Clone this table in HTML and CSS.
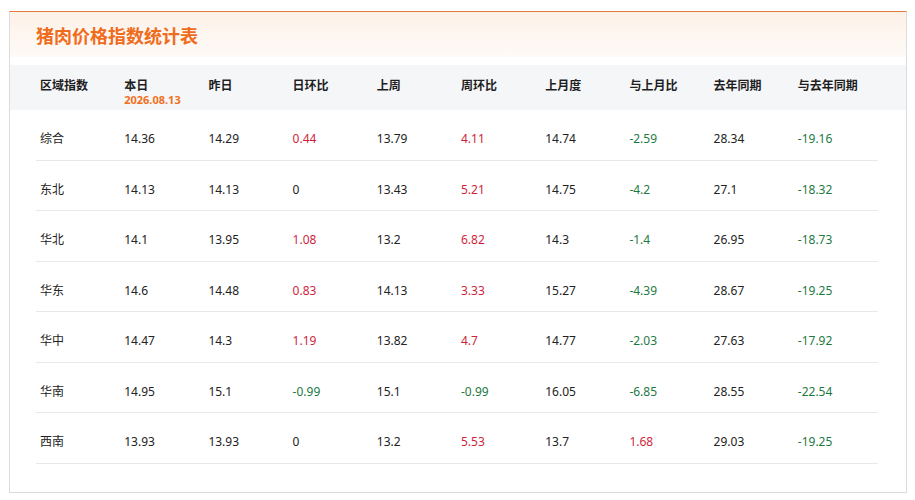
FILE: index.html
```html
<!DOCTYPE html>
<html lang="zh-CN">
<head>
<meta charset="utf-8">
<title>猪肉价格指数统计表</title>
<link rel="stylesheet" href="styles.css">
</head>
<body>
<div class="card">
  <div class="card-head"><h1 class="title">猪肉价格指数统计表</h1></div>
  <div class="thead">
    <div class="grid">
      <div class="th">区域指数</div>
      <div class="th">本日<div class="date">2026.08.13</div></div>
      <div class="th">昨日</div>
      <div class="th">日环比</div>
      <div class="th">上周</div>
      <div class="th">周环比</div>
      <div class="th">上月度</div>
      <div class="th">与上月比</div>
      <div class="th">去年同期</div>
      <div class="th">与去年同期</div>
    </div>
  </div>
  <div class="tbody">
    <div class="grid row">
      <div class="td">综合</div><div class="td">14.36</div><div class="td">14.29</div><div class="td up">0.44</div><div class="td">13.79</div><div class="td up">4.11</div><div class="td">14.74</div><div class="td down">-2.59</div><div class="td">28.34</div><div class="td down">-19.16</div>
    </div>
    <div class="grid row">
      <div class="td">东北</div><div class="td">14.13</div><div class="td">14.13</div><div class="td">0</div><div class="td">13.43</div><div class="td up">5.21</div><div class="td">14.75</div><div class="td down">-4.2</div><div class="td">27.1</div><div class="td down">-18.32</div>
    </div>
    <div class="grid row">
      <div class="td">华北</div><div class="td">14.1</div><div class="td">13.95</div><div class="td up">1.08</div><div class="td">13.2</div><div class="td up">6.82</div><div class="td">14.3</div><div class="td down">-1.4</div><div class="td">26.95</div><div class="td down">-18.73</div>
    </div>
    <div class="grid row">
      <div class="td">华东</div><div class="td">14.6</div><div class="td">14.48</div><div class="td up">0.83</div><div class="td">14.13</div><div class="td up">3.33</div><div class="td">15.27</div><div class="td down">-4.39</div><div class="td">28.67</div><div class="td down">-19.25</div>
    </div>
    <div class="grid row">
      <div class="td">华中</div><div class="td">14.47</div><div class="td">14.3</div><div class="td up">1.19</div><div class="td">13.82</div><div class="td up">4.7</div><div class="td">14.77</div><div class="td down">-2.03</div><div class="td">27.63</div><div class="td down">-17.92</div>
    </div>
    <div class="grid row">
      <div class="td">华南</div><div class="td">14.95</div><div class="td">15.1</div><div class="td down">-0.99</div><div class="td">15.1</div><div class="td down">-0.99</div><div class="td">16.05</div><div class="td down">-6.85</div><div class="td">28.55</div><div class="td down">-22.54</div>
    </div>
    <div class="grid row">
      <div class="td">西南</div><div class="td">13.93</div><div class="td">13.93</div><div class="td">0</div><div class="td">13.2</div><div class="td up">5.53</div><div class="td">13.7</div><div class="td up">1.68</div><div class="td">29.03</div><div class="td down">-19.25</div>
    </div>
  </div>
</div>
</body>
</html>
```

FILE: styles.css
```css
* { box-sizing: border-box; }
html, body { margin: 0; padding: 0; background: #ffffff; }
body {
  font-family: "Noto Sans", "Noto Sans CJK SC", sans-serif;
  font-size: 12px;
  color: #222222;
  padding: 11px 8px 0 9px;
}
.card {
  border: 1px solid #dcdcdc;
  border-top: 1px solid #e27c3e;
  background: #ffffff;
  padding-bottom: 28px;
}
.card-head {
  height: 45px;
  padding-left: 26px;
  display: flex;
  align-items: center;
  background: linear-gradient(180deg, #fdf1e8 0%, #fefaf7 100%);
  margin-bottom: 8px;
}
.title {
  margin: 0;
  font-size: 18px;
  font-weight: 700;
  color: #ef6c1c;
  line-height: 24px;
  font-family: "Noto Sans CJK SC", sans-serif;
}
.thead {
  background: #f5f6f8;
  height: 45px;
}
.grid {
  display: grid;
  grid-template-columns: repeat(10, 1fr);
  margin: 0 28px 0 26px;
}
.th {
  padding: 11px 4px 0;
  font-weight: 700;
  line-height: 17px;
  font-family: "Noto Sans CJK SC", sans-serif;
  color: #1e1e1e;
}
.date {
  font-family: "Noto Sans", sans-serif;
  font-size: 11px;
  line-height: 13px;
  color: #f07022;
  font-weight: 700;
}
.row {
  border-bottom: 1px solid #e8e8e8;
}
.td {
  padding: 20px 4px 12.5px;
  line-height: 17px;
}
.up { color: #d01f3c; }
.down { color: #1d7a3f; }
```
